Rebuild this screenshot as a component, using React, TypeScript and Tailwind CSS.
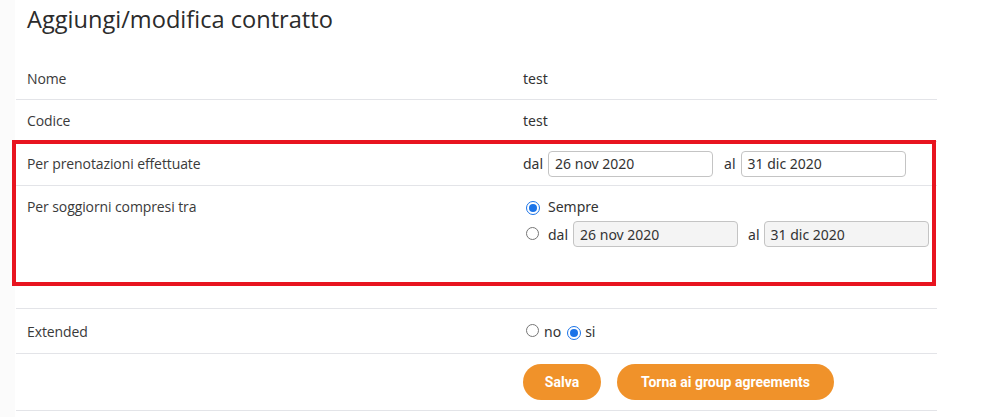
import React from "react";

const labelFont = { fontFamily: '"Open Sans", "Noto Sans", sans-serif' };

function Radio({ checked }: { checked?: boolean }) {
  return checked ? (
    <span className="inline-flex h-[14px] w-[14px] items-center justify-center rounded-full border-[1.5px] border-[#1a73e8] bg-white">
      <span className="h-[8px] w-[8px] rounded-full bg-[#1a73e8]" />
    </span>
  ) : (
    <span className="inline-block h-[13px] w-[13px] rounded-full border border-[#767676] bg-white" />
  );
}

function DateInput({ value, disabled }: { value: string; disabled?: boolean }) {
  return (
    <div
      className={
        "flex h-[26px] w-[165px] items-center rounded-[4px] border border-[#c4c4c4] pl-[6px] text-[14px] text-[#333] " +
        (disabled ? "bg-[#f4f4f4]" : "bg-white")
      }
    >
      {value}
    </div>
  );
}

function Row({
  label,
  children,
  className = "",
}: {
  label?: string;
  children?: React.ReactNode;
  className?: string;
}) {
  return (
    <div className={"flex border-b border-[#e3e4e8] " + className}>
      <div className="w-[507px] shrink-0 pl-[11px] text-[14px] tracking-[-0.1px] text-[#3a3a3a]" style={labelFont}>
        {label}
      </div>
      <div className="flex-1 text-[14px] text-[#333]">{children}</div>
    </div>
  );
}

export default function App() {
  return (
    <div
      className="relative h-[417px] w-[1000px] overflow-hidden bg-white"
      style={{ fontFamily: '"Noto Sans", "Open Sans", sans-serif' }}
    >
      <div className="absolute left-0 top-0 h-full w-[15px] bg-[#fbfbfb]" />
      <div className="relative w-[921px] pl-0 ml-[16px]">
        <h1
          className="pl-[11px] pt-[3px] text-[23.6px] leading-[32px] text-[#2b2b2b]"
          style={labelFont}
        >
          Aggiungi/modifica contratto
        </h1>
        <div className="h-[23px]" />
        <Row label="Nome" className="h-[42px] items-center">
          test
        </Row>
        <Row label="Codice" className="h-[42px] items-center">
          test
        </Row>
        <Row label="Per prenotazioni effettuate" className="h-[44px] items-center">
          <div className="flex items-center">
            <span className="mr-[5px]">dal</span>
            <DateInput value="26 nov 2020" />
            <span className="ml-[11px] mr-[5px]">al</span>
            <DateInput value="31 dic 2020" />
          </div>
        </Row>
        <Row label="Per soggiorni compresi tra" className="h-[123px] items-start pt-[10px]">
          <div className="flex flex-col">
            <div className="flex h-[20px] items-center">
              <span className="ml-[3px] mr-[8px]">
                <Radio checked />
              </span>
              <span>Sempre</span>
            </div>
            <div className="mt-[5px] flex items-center">
              <span className="ml-[3px] mr-[9px]">
                <Radio />
              </span>
              <span className="mr-[5px]">dal</span>
              <DateInput value="26 nov 2020" disabled />
              <span className="ml-[10px] mr-[4px]">al</span>
              <DateInput value="31 dic 2020" disabled />
            </div>
          </div>
        </Row>
        <Row label="Extended" className="h-[45px] items-center">
          <div className="flex items-center">
            <span className="ml-[3px] mr-[5px]">
              <Radio />
            </span>
            <span className="mr-[6px]">no</span>
            <span className="mr-[4px]">
              <Radio checked />
            </span>
            <span>si</span>
          </div>
        </Row>
        <Row className="h-[57px] items-center">
          <div className="flex items-center gap-[16px]" style={{ fontFamily: "Roboto, sans-serif" }}>
            <button className="h-[36px] w-[78px] rounded-full bg-[#f0922a] text-[14px] font-bold text-white">
              Salva
            </button>
            <button className="h-[36px] w-[217px] rounded-full bg-[#f0922a] text-[14px] font-bold text-white">
              Torna ai group agreements
            </button>
          </div>
        </Row>
        <div className="pointer-events-none absolute left-[-4px] top-[140px] h-[146px] w-[924px] border-[4px] border-[#e8141f]" />
      </div>
    </div>
  );
}
